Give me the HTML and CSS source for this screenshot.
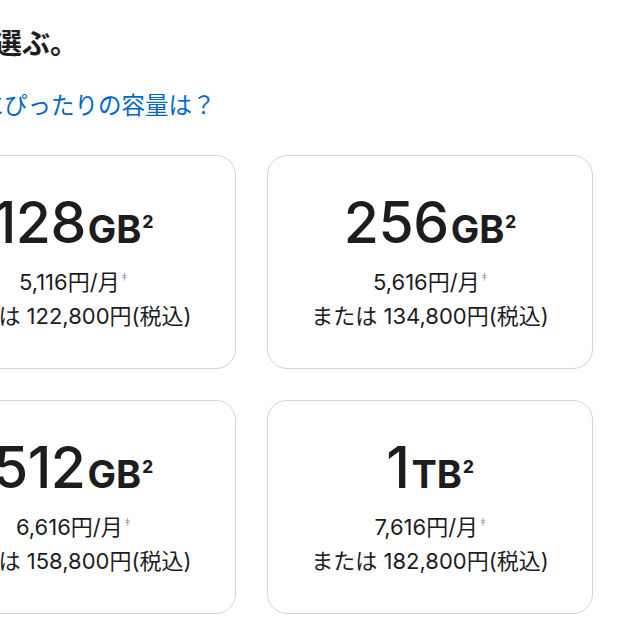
FILE: index.html
```html
<!DOCTYPE html>
<html lang="ja">
<head>
<meta charset="utf-8">
<title>容量を選ぶ</title>
<link rel="stylesheet" href="styles.css">
</head>
<body>
<main class="page">
  <h2 class="headline">容量を選ぶ。</h2>
  <a class="help-link" href="#">あなたにぴったりの容量は？</a>
  <div class="grid">
    <div class="card">
      <div class="cap"><span class="num">128</span><span class="unit">GB</span><span class="fn">2</span></div>
      <div class="monthly">5,116円/月<span class="dag">‡</span></div>
      <div class="full">または 122,800円(税込)</div>
    </div>
    <div class="card">
      <div class="cap"><span class="num">256</span><span class="unit">GB</span><span class="fn">2</span></div>
      <div class="monthly">5,616円/月<span class="dag">‡</span></div>
      <div class="full">または 134,800円(税込)</div>
    </div>
    <div class="card">
      <div class="cap"><span class="num">512</span><span class="unit">GB</span><span class="fn">2</span></div>
      <div class="monthly">6,616円/月<span class="dag">‡</span></div>
      <div class="full">または 158,800円(税込)</div>
    </div>
    <div class="card">
      <div class="cap"><span class="num">1</span><span class="unit">TB</span><span class="fn">2</span></div>
      <div class="monthly">7,616円/月<span class="dag">‡</span></div>
      <div class="full">または 182,800円(税込)</div>
    </div>
  </div>
</main>
</body>
</html>
```
FILE: styles.css
```css
html, body {
  margin: 0;
  padding: 0;
  background: #ffffff;
  overflow: hidden;
}

body {
  font-family: Inter, "Noto Sans CJK JP", sans-serif;
  color: #1d1d1f;
}

.page {
  margin-left: -90px;
  width: 683px;
  padding-top: 22px;
}

.headline {
  margin: 0;
  font-family: "Noto Sans CJK JP", sans-serif;
  font-size: 28px;
  font-weight: 700;
  line-height: 40px;
}

.help-link {
  display: block;
  margin-top: 26px;
  font-family: "Noto Sans CJK JP", sans-serif;
  font-size: 23.5px;
  line-height: 32px;
  color: #0066cc;
  text-decoration: none;
}

.grid {
  display: grid;
  grid-template-columns: 326px 326px;
  column-gap: 31px;
  row-gap: 31px;
  margin-top: 35px;
}

.card {
  box-sizing: border-box;
  height: 214px;
  border: 1px solid #d4d4d4;
  border-radius: 20px;
  display: flex;
  flex-direction: column;
  align-items: center;
  padding-top: 38px;
}

.cap {
  line-height: 57px;
  height: 57px;
  margin-bottom: 9px;
  white-space: nowrap;
}

.num {
  font-size: 57px;
  font-weight: 500;
  letter-spacing: -0.5px;
}

.unit {
  font-size: 38px;
  font-weight: 700;
  margin-left: 2px;
}

.fn {
  font-size: 17px;
  font-weight: 800;
  vertical-align: 15px;
  margin-left: 1px;
}

.monthly,
.full {
  font-size: 22px;
  line-height: 34px;
  white-space: nowrap;
}

.dag {
  font-size: 11px;
  color: #a0a0a0;
  vertical-align: 9px;
  margin-left: 2px;
}
```
